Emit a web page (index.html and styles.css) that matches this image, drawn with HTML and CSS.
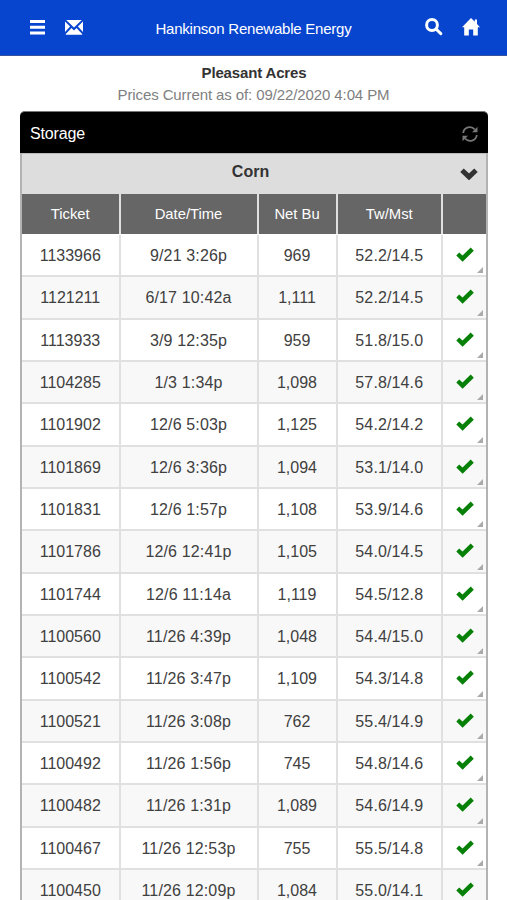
FILE: index.html
```html
<!DOCTYPE html>
<html lang="en">
<head>
<meta charset="utf-8">
<title>Hankinson Renewable Energy</title>
<link rel="stylesheet" href="styles.css">
</head>
<body>
<header class="topbar">
  <svg class="icon-menu" viewBox="0 0 15 15"><path d="M0 0h15v3H0zM0 5.800h15v3H0zM0 11.600h15v3H0z"/></svg>
  <svg class="icon-mail" viewBox="0 0 18 15"><path d="M1.200 0H16.800L9 7.600zM0 1.500L5.100 6.600 0 12zM18 1.500V12L12.900 6.600zM6.500 8L9 10.400l2.500-2.400L17.200 14v.8H.8V14z"/></svg>
  <h1>Hankinson Renewable Energy</h1>
  <svg class="icon-search" viewBox="0 0 18 18"><circle cx="7" cy="7" r="5.400"/><path d="M11 11l4.800 4.600"/></svg>
  <svg class="icon-home" viewBox="0 0 18 18"><path d="M9 0l3.800 3.800V1.500h2.200v4.500L18 9.200h-2.200V17.500h-4.600v-6H6.800v6H2.200V9.200H0z"/></svg>
</header>
<main>
  <div class="location">Pleasant Acres</div>
  <div class="updated">Prices Current as of: 09/22/2020 4:04 PM</div>
  <section class="card">
    <div class="card-title"><span>Storage</span>
      <svg class="icon-refresh" viewBox="0 0 16 16"><path class="arc" d="M1.200 7A6.600 6.600 0 0 1 12.800 3.500M14.800 9A6.600 6.600 0 0 1 3.200 12.500"/><path class="tip" d="M15.500.8v5.500H10zM.5 15.200V9.700H6z"/></svg>
    </div>
    <div class="crop"><b>Corn</b>
      <svg class="icon-chevron" viewBox="0 0 18 12"><path d="M2 2.200l7 6.700 7-6.700"/></svg>
    </div>
    <div class="row head"><div>Ticket</div><div>Date/Time</div><div>Net Bu</div><div>Tw/Mst</div><div></div></div>
    <div id="tickets"></div>
  </section>
</main>
<script src="script.js"></script>
</body>
</html>
```
FILE: styles.css
```css
* { box-sizing: border-box; }
html { height: 100%; overflow: hidden; }
body {
  margin: 0;
  height: 900px;
  overflow: hidden;
  background: #fff;
  color: #333;
  font-family: "Liberation Sans", Arial, sans-serif;
  font-size: 16px;
}
svg { display: block; flex: none; }
.topbar {
  display: flex;
  align-items: center;
  height: 56px;
  padding: 0 27px 1px 30px;
  background: #0845cf;
  border-bottom: 1px solid #3554a0;
  color: #fff;
  fill: #fff;
}
.topbar h1 {
  flex: 1;
  margin: 3px 0 0;
  padding-right: 1px;
  text-align: center;
  font-size: 15px;
  letter-spacing: -.22px;
  font-weight: 400;
  white-space: nowrap;
}
.icon-menu { width: 15px; height: 15px; }
.icon-mail { width: 18px; height: 15px; margin-left: 20px; }
.icon-search { width: 18px; height: 18px; margin-right: 19px; fill: none; stroke: #fff; stroke-width: 3; stroke-linecap: round; }
.icon-home { width: 18px; height: 18px; }
.location {
  height: 28px;
  padding: 1px 0 0 1px;
  line-height: 32px;
  text-align: center;
  font-size: 15px;
  letter-spacing: -.15px;
  font-weight: 700;
}
.updated { height: 27px; line-height: 22px; text-align: center; color: #808080; font-size: 15px; letter-spacing: -.1px; }
.card {
  width: 468px;
  margin-left: 20px;
  border: 2px solid #b3b3b3;
  border-top: 0;
  border-radius: 5px 5px 0 0;
}
.card-title {
  display: flex;
  align-items: center;
  justify-content: space-between;
  height: 42px;
  margin: 0 -2px;
  padding: 3px 10px 0;
  background: #000;
  border-top: 1px solid #777;
  border-radius: 5px 5px 0 0;
  color: #fff;
  letter-spacing: -.15px;
}
.icon-refresh { width: 16px; height: 16px; }
.arc { fill: none; stroke: #777; stroke-width: 1.800; }
.tip { fill: #777; }
.crop {
  display: flex;
  align-items: center;
  height: 41px;
  padding: 0 8px 4px 0;
  background: #ddd;
  border-top: 1px solid #bbb;
}
.crop b { flex: 1; padding-left: 19px; text-align: center; }
.icon-chevron { width: 18px; height: 12px; margin-top: 3px; fill: none; stroke: #333; stroke-width: 5; }
.row {
  display: grid;
  grid-template-columns: 98.500px 138px 79px 105.500px 43px;
  height: 42.330px;
  background: #fff;
  border-bottom: 2px solid #e0e0e0;
}
.row > div {
  display: flex;
  align-items: center;
  justify-content: center;
  padding-top: 2px;
  border-right: 2px solid #e0e0e0;
  white-space: nowrap;
}
.row > div:nth-child(2) { letter-spacing: .15px; }
.row > div:nth-child(4) { letter-spacing: .12px; }
.row > div:last-child { border-right: 0; }
.row.head { height: 40px; background: #666; border: 0; color: #fff; font-size: 14.800px; }
.row.head > div { padding-top: 0; letter-spacing: 0; }
#tickets { padding-top: 1px; color: #404040; }
#tickets .row:nth-child(even) { background: #f8f8f8; }
#tickets .status { position: relative; padding: 0 0 1px 0; }
.icon-check { width: 18px; height: 15px; fill: #078007; }
.corner {
  position: absolute;
  right: 3px;
  bottom: 2px;
  border-bottom: 6px solid #aaa;
  border-left: 6px solid transparent;
}
```
FILE: script.js
```js
const tickets = [
  ["1133966", "9/21 3:26p", "969", "52.2/14.5"],
  ["1121211", "6/17 10:42a", "1,111", "52.2/14.5"],
  ["1113933", "3/9 12:35p", "959", "51.8/15.0"],
  ["1104285", "1/3 1:34p", "1,098", "57.8/14.6"],
  ["1101902", "12/6 5:03p", "1,125", "54.2/14.2"],
  ["1101869", "12/6 3:36p", "1,094", "53.1/14.0"],
  ["1101831", "12/6 1:57p", "1,108", "53.9/14.6"],
  ["1101786", "12/6 12:41p", "1,105", "54.0/14.5"],
  ["1101744", "12/6 11:14a", "1,119", "54.5/12.8"],
  ["1100560", "11/26 4:39p", "1,048", "54.4/15.0"],
  ["1100542", "11/26 3:47p", "1,109", "54.3/14.8"],
  ["1100521", "11/26 3:08p", "762", "55.4/14.9"],
  ["1100492", "11/26 1:56p", "745", "54.8/14.6"],
  ["1100482", "11/26 1:31p", "1,089", "54.6/14.9"],
  ["1100467", "11/26 12:53p", "755", "55.5/14.8"],
  ["1100450", "11/26 12:09p", "1,084", "55.0/14.1"]
];
const check = '<div class="status"><svg class="icon-check" viewBox="0 0 18 15"><path d="M.3 8.500L3.200 5.400 6.500 8.500 14.700.4l3.100 3.300L6.600 14.800z"/></svg><i class="corner"></i></div>';
document.getElementById("tickets").innerHTML = tickets
  .map(t => '<div class="row">' + t.map(v => "<div>" + v + "</div>").join("") + check + "</div>")
  .join("");
```
